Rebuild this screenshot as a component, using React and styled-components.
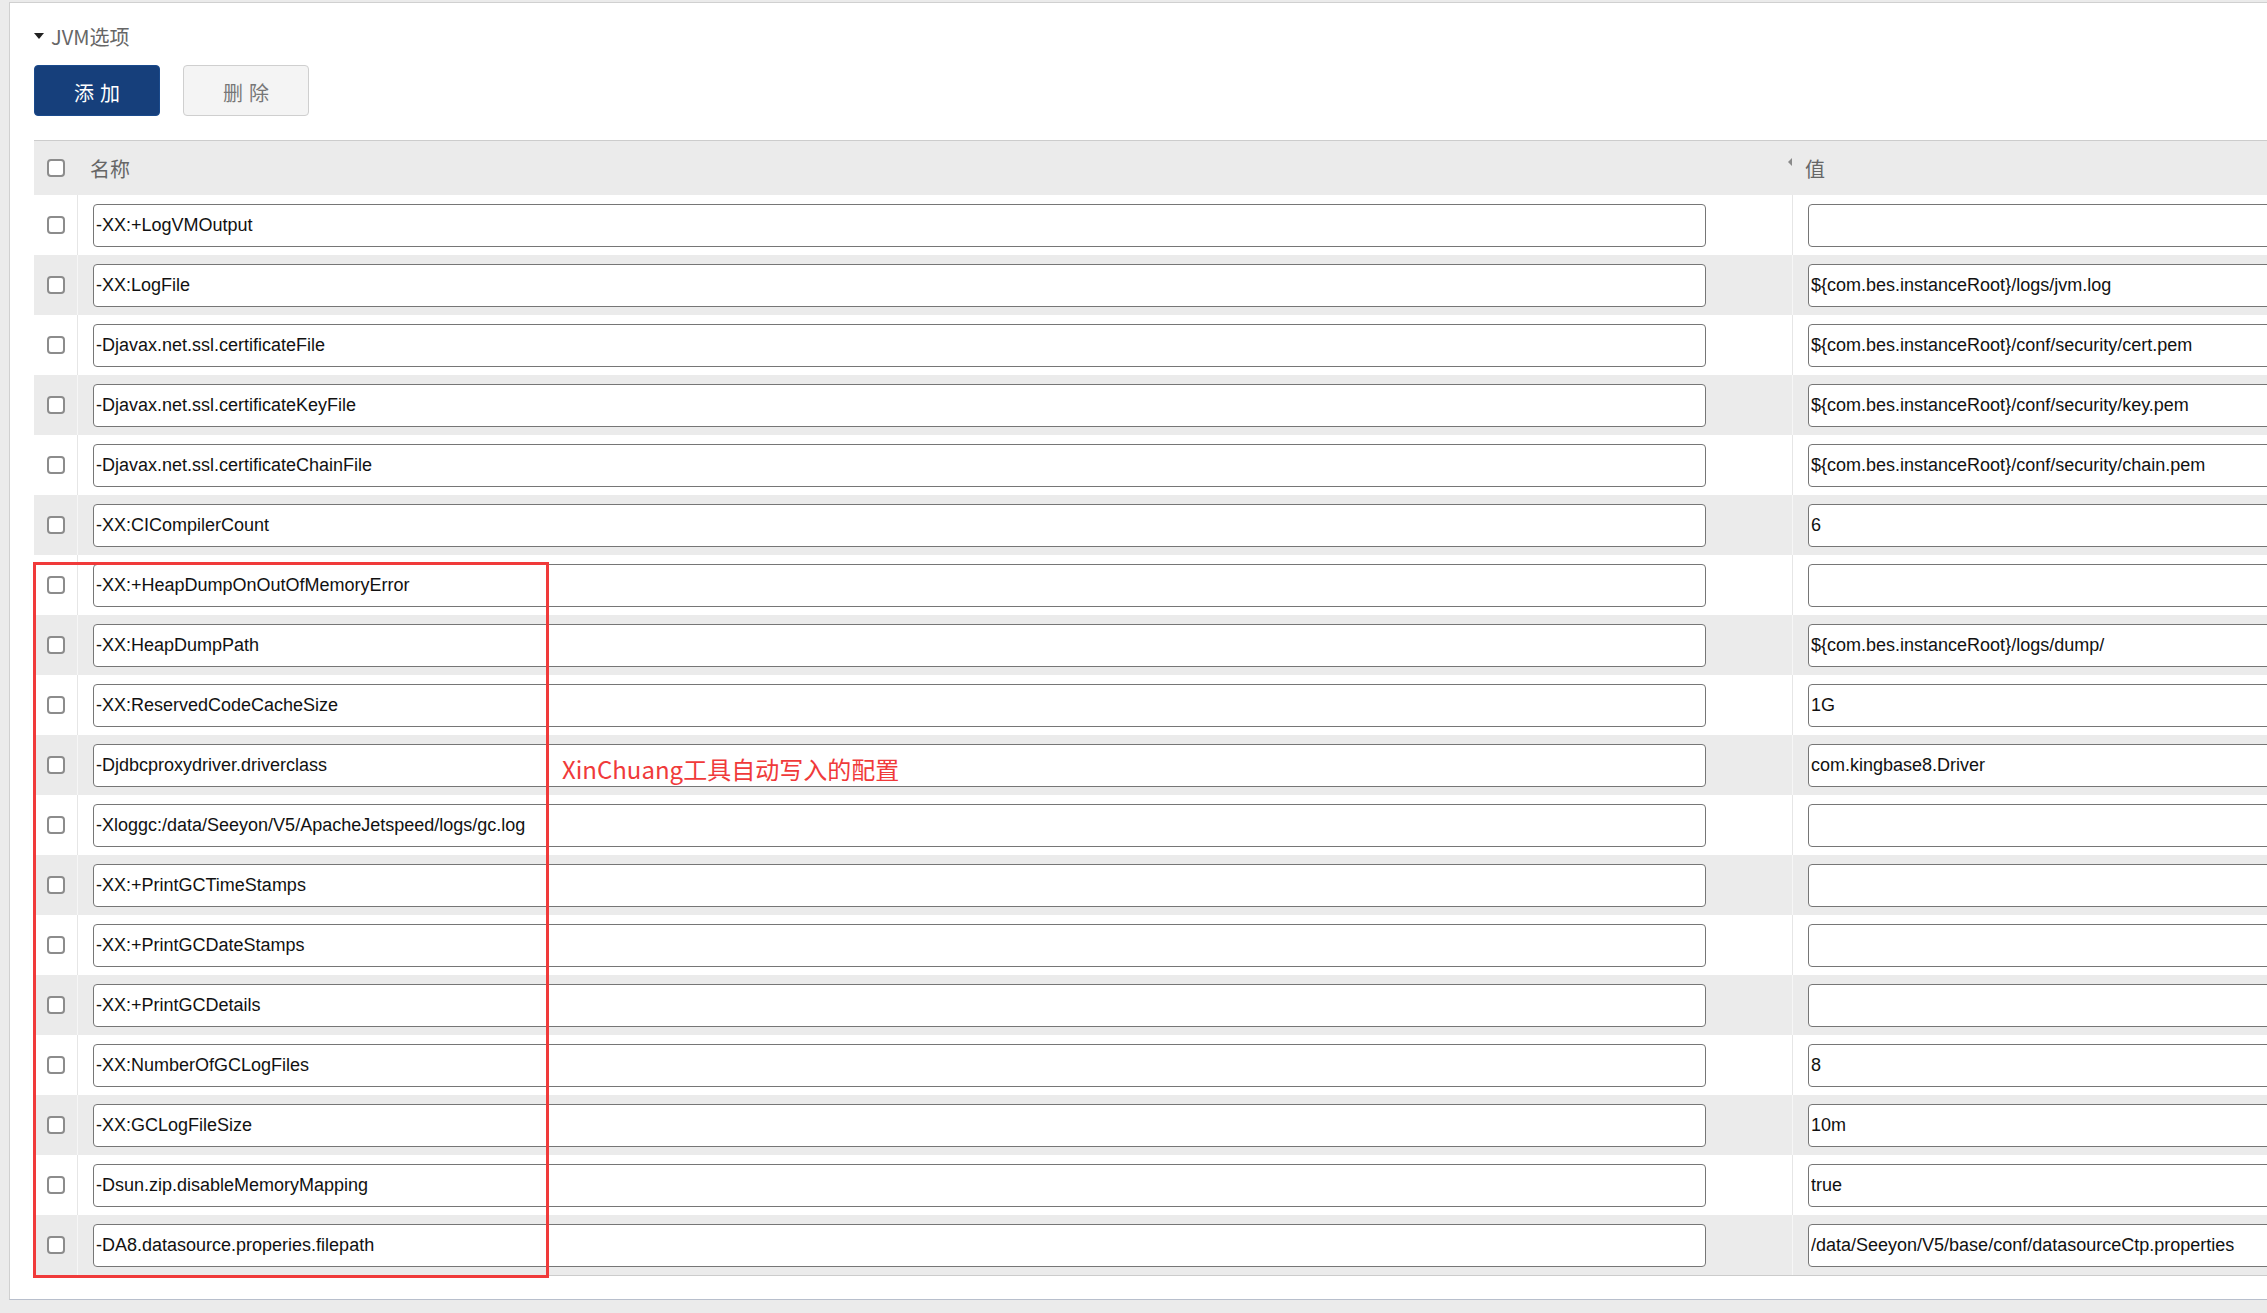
import React from 'react'
import styled, { createGlobalStyle } from 'styled-components'

const GlobalStyle = createGlobalStyle`
  html, body {
    margin: 0;
    padding: 0;
    background: #ebebeb;
    overflow: hidden;
  }
  body {
    font-family: "Liberation Sans", Arial, "Noto Sans CJK SC", sans-serif;
  }
`

const CJK = `"Noto Sans CJK SC", "Noto Sans", sans-serif`

const Page = styled.div`
  width: 3600px;
  padding-top: 2px;
`

const Panel = styled.div`
  margin-left: 9px;
  width: 3540px;
  background: #fff;
  border: 1px solid #d0d0d0;
  border-bottom-color: #b8bfcc;
  border-right: none;
  padding: 20px 0 23px 24px;
`

const SectionTitle = styled.div`
  display: flex;
  align-items: center;
  gap: 7px;
  height: 26px;
  font-family: ${CJK};
  font-size: 20px;
  color: #666;
`

const Caret = styled.span`
  width: 0;
  height: 0;
  border-left: 5px solid transparent;
  border-right: 5px solid transparent;
  border-top: 6px solid #222;
`

const Toolbar = styled.div`
  display: flex;
  gap: 23px;
  margin-top: 16px;
`

const Button = styled.button`
  width: 126px;
  height: 51px;
  border-radius: 4px;
  font-family: ${CJK};
  font-size: 20px;
  letter-spacing: 6px;
  padding: 4px 0 0 6px;
  cursor: pointer;
  border: 1px solid ${({ primary }) => (primary ? '#1a4a8c' : '#cfcfcf')};
  background: ${({ primary }) => (primary ? '#163f7b' : '#f4f4f4')};
  color: ${({ primary }) => (primary ? '#fff' : '#777')};
`

const TableWrap = styled.div`
  position: relative;
  margin-top: 24px;
  border-top: 1px solid #cccccc;
  border-bottom: 1px solid #cccccc;
`

const Row = styled.div`
  display: grid;
  grid-template-columns: 43px 1715px 1715px;
  height: ${({ header }) => (header ? '54px' : '60px')};
  background: ${({ shaded }) => (shaded ? '#ebebeb' : '#fff')};
`

const CheckCell = styled.div`
  display: flex;
  align-items: center;
  justify-content: center;
  padding-left: 1px;
`

const Checkbox = styled.span`
  box-sizing: border-box;
  width: 18px;
  height: 18px;
  border: 2px solid #8c8c8c;
  border-radius: 4px;
  background: #fff;
`

const HeadCell = styled.div`
  position: relative;
  display: flex;
  align-items: center;
  padding-left: 13px;
  font-family: ${CJK};
  font-size: 20px;
  color: #666;
`

const SortMark = styled.span`
  position: absolute;
  right: 0;
  top: 17px;
  width: 0;
  height: 0;
  border-top: 4px solid transparent;
  border-bottom: 4px solid transparent;
  border-right: 4px solid #8a8a8a;
`

const Cell = styled.div`
  border-left: 1px solid ${({ shaded }) => (shaded ? '#f6f6f6' : '#e6e6e6')};
  padding: 9px 0 0 15px;
`

const Field = styled.input`
  box-sizing: border-box;
  display: block;
  width: calc(100% - 86px);
  height: 43px;
  border: 1px solid #767676;
  border-radius: 4px;
  background: #fff;
  padding: 0 0 0 2px;
  font-family: "Liberation Sans", Arial, sans-serif;
  font-size: 18px;
  color: #111;
  outline: none;
`

const Highlight = styled.div`
  position: absolute;
  box-sizing: border-box;
  left: -1px;
  top: 421px;
  width: 516px;
  height: 716px;
  border: 3px solid #f03a3a;
  pointer-events: none;
`

const Note = styled.div`
  position: absolute;
  left: 528px;
  top: 612px;
  line-height: 32px;
  font-family: ${CJK};
  font-size: 24px;
  color: #f03a3a;
  white-space: nowrap;
`

const options = [
  ['-XX:+LogVMOutput', ''],
  ['-XX:LogFile', '${com.bes.instanceRoot}/logs/jvm.log'],
  ['-Djavax.net.ssl.certificateFile', '${com.bes.instanceRoot}/conf/security/cert.pem'],
  ['-Djavax.net.ssl.certificateKeyFile', '${com.bes.instanceRoot}/conf/security/key.pem'],
  ['-Djavax.net.ssl.certificateChainFile', '${com.bes.instanceRoot}/conf/security/chain.pem'],
  ['-XX:CICompilerCount', '6'],
  ['-XX:+HeapDumpOnOutOfMemoryError', ''],
  ['-XX:HeapDumpPath', '${com.bes.instanceRoot}/logs/dump/'],
  ['-XX:ReservedCodeCacheSize', '1G'],
  ['-Djdbcproxydriver.driverclass', 'com.kingbase8.Driver'],
  ['-Xloggc:/data/Seeyon/V5/ApacheJetspeed/logs/gc.log', ''],
  ['-XX:+PrintGCTimeStamps', ''],
  ['-XX:+PrintGCDateStamps', ''],
  ['-XX:+PrintGCDetails', ''],
  ['-XX:NumberOfGCLogFiles', '8'],
  ['-XX:GCLogFileSize', '10m'],
  ['-Dsun.zip.disableMemoryMapping', 'true'],
  ['-DA8.datasource.properies.filepath', '/data/Seeyon/V5/base/conf/datasourceCtp.properties']
]

const App = () => {
  return (
    <Page>
      <GlobalStyle />
      <Panel>
        <SectionTitle>
          <Caret />
          JVM选项
        </SectionTitle>
        <Toolbar>
          <Button primary>添加</Button>
          <Button>删除</Button>
        </Toolbar>
        <TableWrap>
          <Row header shaded>
            <CheckCell><Checkbox /></CheckCell>
            <HeadCell>名称<SortMark /></HeadCell>
            <HeadCell>值</HeadCell>
          </Row>
          {options.map(([name, value], i) => {
            const shaded = i % 2 === 1
            return (
              <Row key={ name } shaded={ shaded }>
                <CheckCell><Checkbox /></CheckCell>
                <Cell shaded={ shaded }>
                  <Field readOnly defaultValue={ name } />
                </Cell>
                <Cell shaded={ shaded }>
                  <Field readOnly defaultValue={ value } />
                </Cell>
              </Row>
            )
          })}
          <Highlight />
          <Note>XinChuang工具自动写入的配置</Note>
        </TableWrap>
      </Panel>
    </Page>
  )
}

export default App
